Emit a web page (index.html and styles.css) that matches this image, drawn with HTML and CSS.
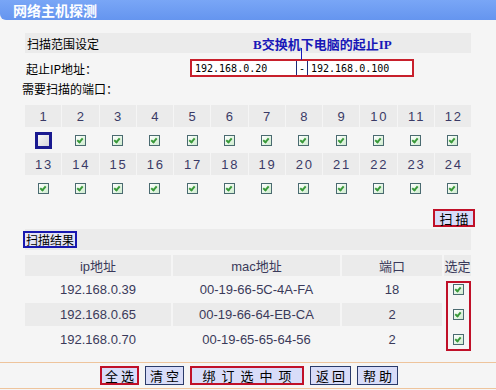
FILE: index.html
```html
<!DOCTYPE html>
<html lang="zh-CN">
<head>
    <meta charset="UTF-8">
    <title>网络主机探测</title>
    <link rel="stylesheet" href="styles.css">
</head>
<body>
    <div class="titlebar"><span>网络主机探测</span></div>
    <div class="content">
        <div class="band range-band">
            <span>扫描范围设定</span>
            <span class="note">B交换机下电脑的起止IP</span>
            <span class="note-line"></span>
        </div>
        <div class="ip-row">
            <span class="label">起止IP地址：</span>
            <div class="ip-range">
                <span class="ip">192.168.0.20</span>
                <span class="dash">-</span>
                <span class="ip">192.168.0.100</span>
            </div>
        </div>
        <div class="ports-label">需要扫描的端口：</div>
        <div class="ports" id="ports"></div>
        <div class="scan-row"><button class="btn marked">扫描</button></div>
        <div class="band result-band"><span class="result-title">扫描结果</span></div>
        <div class="results">
            <div class="th">ip地址</div>
            <div class="th">mac地址</div>
            <div class="th">端口</div>
            <div class="th">选定</div>

            <div class="td">192.168.0.39</div>
            <div class="td">00-19-66-5C-4A-FA</div>
            <div class="td">18</div>
            <div class="td"><span class="cb"></span></div>

            <div class="td alt">192.168.0.65</div>
            <div class="td alt">00-19-66-64-EB-CA</div>
            <div class="td alt">2</div>
            <div class="td"><span class="cb"></span></div>

            <div class="td">192.168.0.70</div>
            <div class="td">00-19-65-65-64-56</div>
            <div class="td">2</div>
            <div class="td"><span class="cb"></span></div>

            <div class="pick-mark"></div>
        </div>
    </div>
    <div class="footer">
        <button class="btn marked">全选</button>
        <button class="btn">清空</button>
        <button class="btn marked wide">绑订选中项</button>
        <button class="btn">返回</button>
        <button class="btn">帮助</button>
    </div>
    <script>
        // build the two rows of port numbers + checkboxes
        const ports = document.getElementById('ports');
        for (let r = 0; r < 2; r++) {
            for (let i = 1; i <= 12; i++) {
                const n = document.createElement('div');
                n.className = 'num';
                n.textContent = r * 12 + i;
                ports.appendChild(n);
            }
            for (let i = 1; i <= 12; i++) {
                const c = document.createElement('div');
                c.className = 'pick';
                const box = document.createElement('span');
                box.className = (r === 0 && i === 1) ? 'cb focus' : 'cb';
                c.appendChild(box);
                ports.appendChild(c);
            }
        }
    </script>
</body>
</html>
```

FILE: styles.css
```css
body {
    margin: 0;
    padding: 0;
    background-color: #f5f5f5;
    font-family: "Liberation Sans", "Noto Sans CJK SC", sans-serif;
    font-size: 12px;
    color: #000;
}

.titlebar {
    height: 20px;
    background: linear-gradient(#79a6f6, #6595ef);
    border-bottom-left-radius: 6px;
    display: flex;
    align-items: center;
    padding-left: 13px;
}

.titlebar span {
    color: #fff;
    font-family: "Noto Sans CJK SC", sans-serif;
    font-weight: bold;
    font-size: 14px;
}

.content {
    width: 446px;
    margin-left: 25px;
}

.band {
    background-color: #ebebeb;
    height: 20px;
    display: flex;
    align-items: center;
    font-family: "Noto Sans CJK SC", sans-serif;
}

.range-band {
    margin-top: 13px;
    padding-left: 2px;
    position: relative;
}

.note {
    position: absolute;
    left: 228px;
    top: 1px;
    color: #1818b8;
    font-weight: bold;
    font-size: 13px;
    font-family: "Liberation Serif", "Noto Sans CJK SC", serif;
}

.note-line {
    position: absolute;
    left: 276px;
    top: 15px;
    width: 1px;
    height: 12px;
    background-color: #1818b8;
}

.ip-row {
    height: 26px;
    margin-top: 2px;
    display: flex;
    align-items: center;
    font-family: "Noto Sans CJK SC", sans-serif;
}

.label {
    padding-left: 1px;
    width: 164px;
}

.ip-range {
    display: flex;
    border: 2px solid #c8202c;
    height: 14px;
    width: 220px;
    background-color: #fff;
}

.ip-range span {
    font-family: "DejaVu Sans Mono", monospace;
    font-size: 10px;
    display: flex;
    align-items: center;
}

.ip {
    padding-left: 3px;
    flex: 1;
}

.dash {
    width: 10px;
    justify-content: center;
    border-left: 1px solid #1c2a78;
    border-right: 1px solid #1c2a78;
}

.ports-label {
    height: 16px;
    line-height: 16px;
    margin-left: -3px;
    font-family: "Noto Sans CJK SC", sans-serif;
}

.ports {
    margin-top: 8px;
    display: grid;
    grid-template-columns: repeat(12, 1fr);
    grid-template-rows: 22px 26px 22px 26px;
    column-gap: 1px;
}

.num {
    background-color: #ebebeb;
    display: flex;
    align-items: center;
    justify-content: center;
    color: #3a3a66;
    font-size: 13px;
    letter-spacing: 2px;
    padding-left: 2px;
}

.pick {
    display: flex;
    align-items: center;
    justify-content: center;
}

.cb {
    display: inline-block;
    width: 9px;
    height: 9px;
    border: 1px solid #4a6a70;
    background: linear-gradient(135deg, #ffffff, #cfeccf);
    position: relative;
}

.cb::after {
    content: "";
    position: absolute;
    left: 2px;
    top: 1px;
    width: 2px;
    height: 4px;
    border-right: 2px solid #3a9a3a;
    border-bottom: 2px solid #3a9a3a;
    transform: rotate(40deg);
}

.cb.focus {
    width: 11px;
    height: 11px;
    border: 3px solid #1a1a90;
    background: linear-gradient(135deg, #f8f8f8, #d4d4dc);
}

.cb.focus::after {
    display: none;
}

.scan-row {
    display: flex;
    justify-content: flex-end;
    margin-top: 8px;
    margin-right: -4px;
    height: 18px;
}

.btn {
    font-family: "Noto Sans CJK SC", sans-serif;
    font-size: 13px;
    letter-spacing: 3px;
    text-indent: 3px;
    white-space: nowrap;
    padding: 0;
    margin: 0;
    background-color: #d8dcf8;
    border: 1px solid #2a3a6a;
    color: #000;
    height: 19px;
    width: 39px;
    line-height: 15px;
    overflow: visible;
}

.btn.marked {
    border: 2px solid #c01028;
}

.scan-row .btn {
    height: 18px;
    width: 42px;
}

.result-band {
    margin-top: 2px;
    height: 21px;
}

.result-title {
    border: 2px solid #1818b0;
    margin-left: -2px;
    padding: 0 1px;
    height: 13px;
    line-height: 13px;
    background-color: #e4e4f4;
}

.results {
    position: relative;
    margin-top: 5px;
    display: grid;
    grid-template-columns: 146px 167px 100px 27px;
    grid-template-rows: 21px 23px 23px 23px;
    gap: 2px;
}

.th, .td {
    display: flex;
    align-items: center;
    justify-content: center;
    color: #3a3a5a;
    font-size: 13px;
}

.th {
    background-color: #ebebeb;
    font-family: "Liberation Sans", "Noto Sans CJK SC", sans-serif;
}

.td.alt {
    background-color: #ebebeb;
}

.results .cb {
    margin-left: 2px;
}

.pick-mark {
    position: absolute;
    left: 421px;
    top: 26px;
    width: 21px;
    height: 66px;
    border: 2px solid #c01028;
}

.footer {
    margin-top: 11px;
    border-top: 1px solid #eec49c;
    border-bottom: 1px solid #eec49c;
    height: 25px;
    display: flex;
    justify-content: center;
    align-items: center;
    gap: 6px;
    padding-left: 2px;
}

.footer .btn.wide {
    width: 114px;
    letter-spacing: 6px;
    text-indent: 6px;
}

.footer .btn:nth-child(4),
.footer .btn:nth-child(5) {
    width: 41px;
}
```
